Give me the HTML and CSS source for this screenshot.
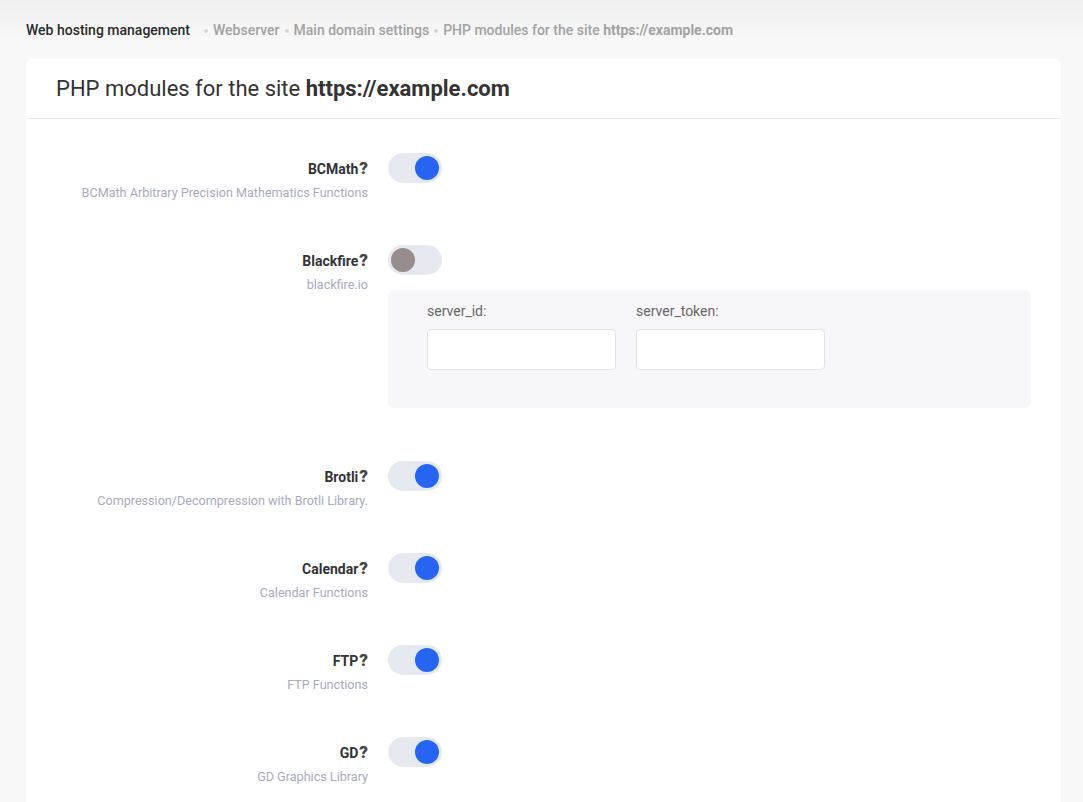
FILE: index.html
```html
<!DOCTYPE html>
<html>
<head>
<meta charset="utf-8">
<link rel="stylesheet" href="styles.css">
</head>
<body>
<div class="page">
  <nav class="crumbs">
    <span class="crumb-root">Web hosting management</span>
    <span class="dot"></span><span class="crumb">Webserver</span>
    <span class="dot"></span><span class="crumb">Main domain settings</span>
    <span class="dot"></span><span class="crumb">PHP modules for the site <b>https://example.com</b></span>
  </nav>
  <section class="card">
    <header class="card-head">
      <h1>PHP modules for the site <b>https://example.com</b></h1>
    </header>
    <div class="card-body">
      <div class="row">
        <div class="label"><div class="name">BCMath<span class="q">?</span></div><div class="desc">BCMath Arbitrary Precision Mathematics Functions</div></div>
        <div class="ctrl"><span class="toggle on"><span class="knob"></span></span></div>
      </div>
      <div class="row with-panel">
        <div class="label"><div class="name">Blackfire<span class="q">?</span></div><div class="desc">blackfire.io</div></div>
        <div class="ctrl">
          <span class="toggle off"><span class="knob"></span></span>
          <div class="panel">
            <div class="field"><label>server_id:</label><input type="text"></div>
            <div class="field"><label>server_token:</label><input type="text"></div>
          </div>
        </div>
      </div>
      <div class="row">
        <div class="label"><div class="name">Brotli<span class="q">?</span></div><div class="desc">Compression/Decompression with Brotli Library.</div></div>
        <div class="ctrl"><span class="toggle on"><span class="knob"></span></span></div>
      </div>
      <div class="row">
        <div class="label"><div class="name">Calendar<span class="q">?</span></div><div class="desc">Calendar Functions</div></div>
        <div class="ctrl"><span class="toggle on"><span class="knob"></span></span></div>
      </div>
      <div class="row">
        <div class="label"><div class="name">FTP<span class="q">?</span></div><div class="desc">FTP Functions</div></div>
        <div class="ctrl"><span class="toggle on"><span class="knob"></span></span></div>
      </div>
      <div class="row">
        <div class="label"><div class="name">GD<span class="q">?</span></div><div class="desc">GD Graphics Library</div></div>
        <div class="ctrl"><span class="toggle on"><span class="knob"></span></span></div>
      </div>
    </div>
  </section>
</div>
</body>
</html>
```
FILE: styles.css
```css
html, body {
  margin: 0;
  padding: 0;
}
body {
  font-family: Roboto, "Liberation Sans", sans-serif;
  background: linear-gradient(#efeff0 0, #f8f8f8 40px, #f8f8f8 100%);
  color: #333;
  overflow: hidden;
  height: 802px;
}
.page {
  padding: 20px 22px 0 26px;
}
.crumbs {
  display: flex;
  align-items: center;
  font-size: 14px;
  line-height: 20px;
  height: 20px;
}
.crumb-root {
  color: #2b2b2b;
  font-weight: 500;
  margin-right: 14px;
}
.crumb {
  color: #a2a2a2;
  font-weight: 500;
}
.crumb b {
  font-weight: 700;
}
.dot {
  width: 4px;
  height: 4px;
  border-radius: 50%;
  background: #d4d4dc;
  margin: 1px 5px 0 0;
}
.crumb + .dot {
  margin-left: 5px;
}
.card {
  margin-top: 19px;
  background: #fff;
  border-radius: 6px;
  min-height: 760px;
}
.card-head {
  height: 59px;
  border-bottom: 1px solid #e9e9ef;
  display: flex;
  align-items: center;
  padding: 0 30px;
}
.card-head h1 {
  margin: 0;
  font-size: 22px;
  font-weight: 400;
  color: #333;
}
.card-head h1 b {
  font-weight: 700;
}
.card-body {
  padding: 34px 30px 0 30px;
}
.row {
  display: grid;
  grid-template-columns: 312px 1fr;
  column-gap: 20px;
  padding-bottom: 44px;
}
.row.with-panel {
  padding-bottom: 53px;
}
.label {
  text-align: right;
}
.name {
  font-size: 14px;
  font-weight: 700;
  color: #333;
  line-height: 30px;
  height: 30px;
}
.q {
  font-size: 17px;
  font-weight: 900;
  color: #444;
  margin-left: 1px;
}
.desc {
  font-size: 12.6px;
  color: #a9a9c2;
  line-height: 16px;
  margin-top: 2px;
}
.toggle {
  display: flex;
  align-items: center;
  width: 54px;
  height: 30px;
  border-radius: 15px;
  background: #e7e9f0;
  box-sizing: border-box;
  padding: 0 3px;
}
.toggle.on {
  justify-content: flex-end;
}
.knob {
  width: 24px;
  height: 24px;
  border-radius: 50%;
  background: #2764f1;
}
.toggle.off .knob {
  background: #978d8d;
}
.panel {
  margin-top: 15px;
  background: #f7f7fa;
  border-radius: 6px;
  padding: 12px 39px 38px;
  display: flex;
  gap: 20px;
}
.field {
  display: flex;
  flex-direction: column;
}
.field label {
  font-size: 14px;
  color: #666;
  line-height: 18px;
  margin-bottom: 9px;
}
.field input {
  width: 189px;
  height: 41px;
  box-sizing: border-box;
  border: 1px solid #e1e1ea;
  border-radius: 4px;
  background: #fff;
  margin: 0;
  padding: 0 10px;
  font: inherit;
}
```
